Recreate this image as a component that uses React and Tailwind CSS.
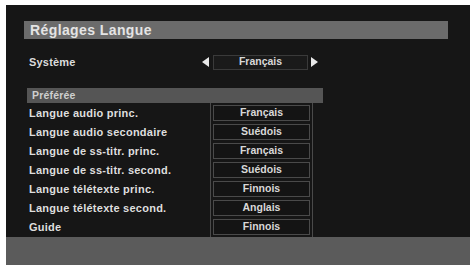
import React from 'react';

const ROWS = [
  ['Langue audio princ.', 'Français'],
  ['Langue audio secondaire', 'Suédois'],
  ['Langue de ss-titr. princ.', 'Français'],
  ['Langue de ss-titr. second.', 'Suédois'],
  ['Langue télétexte princ.', 'Finnois'],
  ['Langue télétexte second.', 'Anglais'],
  ['Guide', 'Finnois'],
];

export default function App() {
  return (
    <div className="w-[470px] h-[265px] bg-white pl-[6px] pt-[5px] overflow-hidden" style={{ fontFamily: '"Liberation Sans", Arial, sans-serif' }}>
      <div className="w-[464px] h-[260px] bg-[#161616] flex flex-col">
        {/* Titre */}
        <div className="mt-[16px] ml-[18px] w-[424px] h-[18px] bg-[#6b6b6b] flex items-center pl-[6px]">
          <span className="text-[14px] font-bold text-[#e4e4e4] tracking-[0.4px]">Réglages Langue</span>
        </div>

        {/* Système */}
        <div className="mt-[14px] h-[18px] flex items-center">
          <span className="ml-[23px] w-[170px] text-[11px] font-bold text-[#dcdcdc] tracking-[0.2px]">Système</span>
          <div className="ml-[3px] flex items-center">
            <svg width="8" height="10" viewBox="0 0 8 10"><polygon points="7,0 7,10 0,5" fill="#e8e8e8" /></svg>
            <div className="ml-[3px] w-[95px] h-[15px] border border-[#3a3a3a] bg-[#1a1a1a] flex items-center justify-center text-[10.5px] font-bold text-[#d8d8d8]">Français</div>
            <svg className="ml-[3px]" width="8" height="10" viewBox="0 0 8 10"><polygon points="0,0 0,10 7,5" fill="#e8e8e8" /></svg>
          </div>
        </div>

        {/* Préférée */}
        <div className="mt-[17px] ml-[21px] w-[296px] h-[15px] bg-[#555555] flex items-center pl-[5px]">
          <span className="text-[10.5px] font-bold text-[#cfcfcf] tracking-[0.2px]">Préférée</span>
        </div>

        {/* Lignes */}
        <div className="flex">
          <div className="w-[183px] pl-[23px] flex flex-col pt-[1px]">
            {ROWS.map(([label]) => (
              <div key={label} className="h-[19px] flex items-center text-[11px] font-bold text-[#dedede] tracking-[0.25px] whitespace-nowrap">{label}</div>
            ))}
          </div>
          <div className="w-[103px] ml-[21px] border-x border-[#4a4a4a] flex flex-col">
            {ROWS.map(([label, value]) => (
              <div key={label} className="h-[19px] flex items-center px-[2px]">
                <div className="w-full h-[16px] border border-[#4a4a4a] bg-[#141414] flex items-center justify-center text-[10.5px] font-bold text-[#d8d8d8]">{value}</div>
              </div>
            ))}
          </div>
        </div>

        {/* Barre inférieure */}
        <div className="flex-1 bg-[#5b5b5b]" />
      </div>
    </div>
  );
}
